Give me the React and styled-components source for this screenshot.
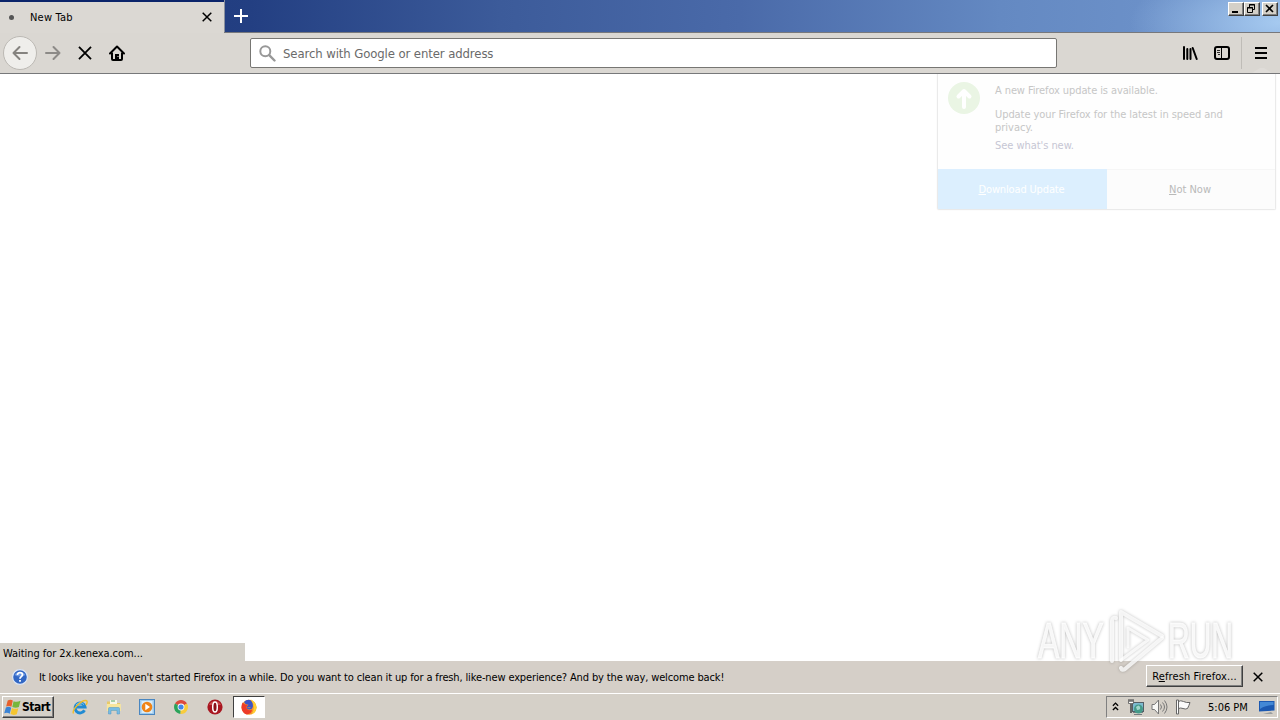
import React from 'react';
import styled, { createGlobalStyle } from 'styled-components';

const GlobalStyle = createGlobalStyle`
  * {
    box-sizing: border-box;
  }

  body {
    margin: 0;
    background: #fff;
    overflow: hidden;
  }
`;

const Desktop = styled.div`
  position: relative;
  display: flex;
  flex-direction: column;
  width: 1280px;
  height: 720px;
  font-family: 'DejaVu Sans Condensed', 'DejaVu Sans', sans-serif;
  font-stretch: condensed;
  font-size: 11px;
  line-height: 13px;
  color: #000;
`;

const Label = styled.span`
  letter-spacing: ${({ $track }) => $track || '0'};
  white-space: nowrap;

  u {
    text-underline-offset: 1px;
    text-decoration-thickness: 1px;
  }
`;

/* ---- browser window ---- */

const TitleBar = styled.header`
  display: flex;
  height: 33px;
  border-bottom: 1px solid #77787c;
  background: radial-gradient(ellipse 150px 60px at 100% 70%, #a6caf0 0%, rgba(166, 202, 240, 0) 100%),
    linear-gradient(to right, #1b3577 0, #233f82 250px, #3c5b9a 500px, #4a6aa9 740px, #6489c2 1000px, #7297ce 1280px);
`;

const Tab = styled.div`
  display: flex;
  align-items: center;
  width: 224px;
  height: 33px;
  padding: 2px 12px 0 9px;
  border-top: 2px solid #0a246a;
  background: #dbd8d3;
`;

const Dot = styled.i`
  width: 5px;
  height: 5px;
  margin: 0 16px 3px 0;
  border-radius: 50%;
  background: #555;
`;

const TabTitle = styled(Label)`
  flex: 1;
  margin-bottom: 3px;
`;

const TabClose = styled.div`
  display: flex;
  margin-bottom: 3px;
`;

const NewTab = styled.div`
  flex: 1;
  padding: 9px 0 0 9px;
  border-left: 1px solid #8b919e;
`;

const WindowControls = styled.div`
  display: flex;
  padding: 2px 2px 0 0;
`;

const ControlButton = styled.div`
  width: 16px;
  height: 14px;
  margin-left: ${({ $gap }) => $gap || 0}px;
  border: 1px solid;
  border-color: #fff #404040 #404040 #fff;
  box-shadow: inset -1px -1px 0 #808080;
  background: #d4d0c8;

  svg {
    display: block;
  }
`;

const Toolbar = styled.nav`
  display: flex;
  align-items: center;
  height: 41px;
  border-bottom: 1px solid #77787a;
  background: #dad7d2;
`;

const ToolButton = styled.div`
  display: flex;
  align-items: center;
  justify-content: center;
  width: 32px;
  height: 32px;
`;

const BackButton = styled(ToolButton)`
  width: 34px;
  height: 34px;
  margin: 0 0 0 3px;
  border: 1px solid #bcb9b4;
  border-radius: 50%;
  background: #efeeeb;
`;

const UrlBar = styled.div`
  display: flex;
  align-items: center;
  width: 807px;
  height: 30px;
  margin: -1px 117px 0 117px;
  padding: 1px 0 0 8px;
  border: 1px solid #777673;
  border-radius: 2px;
  background: #fff;
  color: #6a6a6a;
  font-size: 13px;

  svg {
    margin-right: 7px;
  }
`;

const MenuSlot = styled.div`
  display: flex;
  justify-content: center;
  align-items: center;
  width: 39px;
  height: 32px;
  margin-left: 3px;
  border-left: 1px solid #bfbcb7;
`;

const Page = styled.main`
  display: flex;
  flex: 1;
  align-items: flex-end;
  background: #fff;
`;

const StatusPanel = styled.div`
  width: 245px;
  height: 18px;
  padding: 4px 0 0 3px;
  background: #d4d0c8;
`;

const NotificationBar = styled.div`
  display: flex;
  align-items: center;
  height: 32px;
  padding-left: 12px;
  background: #d5cfc8;
`;

const NotificationText = styled(Label)`
  flex: 1;
  margin-left: 11px;
`;

const RaisedButton = styled.div`
  display: flex;
  align-items: center;
  justify-content: center;
  width: ${({ $width }) => $width}px;
  height: 22px;
  border: 1px solid;
  border-color: #fff #404040 #404040 #fff;
  box-shadow: inset -1px -1px 0 #808080;
  background: #d5d0c8;
`;

const RefreshButton = styled(RaisedButton)`
  margin-bottom: 2px;
`;

const NotificationClose = styled.div`
  display: flex;
  margin: 0 17px 0 10px;
`;

/* ---- update doorhanger, still fading in ---- */

const Doorhanger = styled.aside`
  position: absolute;
  top: 74px;
  left: 937px;
  width: 339px;
  height: 136px;
  border: 1px solid #eaeaea;
  border-top: 0;
  border-radius: 0 0 2px 2px;
  background: #fefefe;
  box-shadow: 0 0 2px rgba(0, 0, 0, 0.06);
  color: #c6c6c6;
`;

const Arrow = styled.i`
  position: absolute;
  top: 68px;
  left: 1252px;
  width: 20px;
  height: 5px;
  background: #dfdcd8;
  clip-path: polygon(0 100%, 40% 0, 60% 0, 100% 100%);
`;

const DoorhangerBody = styled.div`
  display: flex;
  height: 95px;
  padding: 8px 10px 0;

  svg {
    flex: none;
    margin-right: 15px;
  }
`;

const Message = styled.div`
  display: flex;
  flex-direction: column;
  padding-top: 2px;
`;

const Paragraph = styled.div`
  display: flex;
  flex-direction: column;
  margin: 11px 0 5px;
`;

const WhatsNew = styled(Label)`
  color: #c6c6d4;
`;

const DoorhangerButtons = styled.div`
  display: flex;
  height: 40px;
`;

const DoorhangerButton = styled.div`
  display: flex;
  align-items: center;
  justify-content: center;
  width: ${({ $primary }) => ($primary ? 169 : 168)}px;
  padding-right: 2px;
  border-top: 1px solid ${({ $primary }) => ($primary ? '#dcefff' : '#f6f6f6')};
  background: ${({ $primary }) => ($primary ? '#dceffe' : '#fcfcfc')};
  color: ${({ $primary }) => ($primary ? '#fff' : '#b9b9b9')};
`;

/* ---- taskbar ---- */

const Taskbar = styled.footer`
  display: flex;
  align-items: center;
  height: 27px;
  padding: 0 2px 0 2px;
  border-top: 1px solid #fff;
  background: #d5d0c8;
`;

const StartButton = styled(RaisedButton)`
  justify-content: flex-start;
  padding-left: 1px;
  font-weight: bold;
  font-size: 12px;

  svg {
    margin-right: 1px;
  }
`;

const Launchers = styled.div`
  display: flex;
  gap: 17.7px;
  margin-left: 18px;
`;

const ActiveTask = styled.div`
  display: flex;
  align-items: center;
  justify-content: center;
  width: 32px;
  height: 22px;
  margin-left: 10px;
  border: 1px solid;
  border-color: #404040 #fff #fff #404040;
  background: #fff;
`;

const Tray = styled.div`
  display: flex;
  align-items: center;
  width: 172px;
  height: 22px;
  margin-left: auto;
  padding-left: 5px;
  border: 1px solid;
  border-color: #808080 #fff #fff #808080;

  svg {
    flex: none;
  }
`;

const TrayIcons = styled.div`
  display: flex;
  align-items: center;
  gap: 7px;
  margin-left: 9px;
`;

const Clock = styled(Label)`
  margin: 0 11px 0 16px;
`;

const Watermark = styled.svg`
  position: absolute;
  top: 604px;
  left: 1030px;
  filter: drop-shadow(0 0 1.5px rgba(0, 0, 0, 0.3));
`;

const CrossIcon = ({ size, weight = 1.5 }) => (
  <svg width={size} height={size} viewBox="0 0 10 10" stroke="#000" strokeWidth={weight}>
    <path d="M.7.7l8.6 8.6M9.3.7L.7 9.3" />
  </svg>
);

const ArrowIcon = ({ flip, color }) => (
  <svg width="16" height="16" viewBox="0 0 16 16" fill="none" stroke={color} strokeWidth="2" strokeLinecap="round" strokeLinejoin="round" transform={flip ? 'scale(-1 1)' : undefined}>
    <path d="M15 8H1.5M7.5 2l-6 6 6 6" />
  </svg>
);

const HomeIcon = () => (
  <svg width="16" height="16" viewBox="0 0 16 16" fill="none" stroke="#000" strokeLinejoin="round">
    <path d="M1 8.5l7-7 7 7" strokeWidth="2" strokeLinecap="round" />
    <path d="M3 7.5V14q0 1 1 1h8q1 0 1-1V7.5" strokeWidth="2" />
    <path d="M6 15V9h4v6z" fill="#000" stroke="none" />
    <path d="M8.5 11.5h1" stroke="#dad7d2" />
  </svg>
);

const SearchIcon = () => (
  <svg width="17" height="17" viewBox="0 0 17 17" fill="none" stroke="#989898" strokeLinecap="round">
    <circle cx="6.3" cy="6.3" r="5" strokeWidth="2" />
    <path d="M10.2 10.2l5.3 5.3" strokeWidth="2.4" />
  </svg>
);

const LibraryIcon = () => (
  <svg width="16" height="16" viewBox="0 0 16 16" stroke="#000" strokeWidth="2" strokeLinecap="round">
    <path d="M2 2v12M5.3 4v10M8.5 4v10M10.7 3l4 11" />
  </svg>
);

const SidebarIcon = () => (
  <svg width="16" height="16" viewBox="0 0 16 16" fill="none" stroke="#000">
    <rect x="1" y="2" width="14" height="12" rx="2" strokeWidth="2" />
    <path d="M7.5 2v12" />
    <path d="M3 5.5h3M3 7.5h3M4 9.5h2" strokeWidth=".8" />
  </svg>
);

const HelpIcon = () => (
  <svg width="16" height="16" viewBox="0 0 16 16">
    <circle cx="8" cy="8" r="7.4" fill="#3267c4" stroke="#dce6f5" strokeWidth="1.2" />
    <path d="M2.5 6a6 5 0 0 1 11 0Q8 9 2.5 6z" fill="#6e9ae4" />
    <path d="M5.5 6c0-3.4 5-3 5-.2C10.5 7.8 8 7.5 8 9.7M8 11v1.8" fill="none" stroke="#fff" strokeWidth="1.8" />
  </svg>
);

const UpdateIcon = () => (
  <svg width="32" height="32" viewBox="0 0 32 32">
    <circle cx="16" cy="16" r="16" fill="#eaf5e4" />
    <path d="M16 25V10M10.5 14.5L16 9l5.5 5.500" fill="none" stroke="#fff" strokeWidth="4" strokeLinecap="round" strokeLinejoin="round" />
  </svg>
);

const WindowsIcon = () => (
  <svg width="17" height="17" viewBox="0 0 16 16">
    <path d="M3.5 1.500Q6 -.2 8.300 1.500L7 7.300Q4.500 5.800 2 7.100z" fill="#e8602c" />
    <path d="M9 2q3 1.300 6.500-.3L14 7.600Q11 9 7.800 7.500z" fill="#77b63c" />
    <path d="M1.800 8q2.600-1.400 5 .2L5.400 13.800Q3 12.300 .2 13.500z" fill="#3b83d4" />
    <path d="M7.500 8.400q3 1.500 6 .2L12 14.300q-3 1.400-5.900-.1z" fill="#f5c52f" />
  </svg>
);

const ExplorerIcon = () => (
  <svg width="16" height="16" viewBox="0 0 16 16" fill="none">
    <path d="M12.5 11.300A5 5 0 1 1 13 8H4" stroke="#218bd3" strokeWidth="3" />
    <path d="M12 5.600A5 5 0 0 0 4 6" stroke="#74c5ef" />
    <path d="M1.500 14.500C-.5 11 9 1 14 1.500c2 .5 1 3 0 4.500" stroke="#f0bd2b" strokeWidth="1.400" />
  </svg>
);

const FolderIcon = () => (
  <svg width="16" height="16" viewBox="0 0 16 16">
    <path d="M1 2.500h5l1.500 1.500H14v8H1z" fill="#e8ca68" />
    <path d="M4 1h7v4H4z" fill="#f8f8e8" />
    <path d="M5 2h4" stroke="#58a768" />
    <path d="M.8 5h14v7h-14z" fill="#f9e69c" />
    <path d="M2.500 15V9.500q0-1 1-1h9q1 0 1 1V15H11v-3.500H5V15z" fill="#78bce4" stroke="#4b94c4" strokeWidth=".5" />
  </svg>
);

const PlayerIcon = () => (
  <svg width="16" height="16" viewBox="0 0 16 16">
    <rect x=".5" y=".5" width="15" height="15" fill="#9ecbee" stroke="#4a86c0" />
    <rect x="2.500" y="2" width="11" height="12" fill="#d8ecf9" />
    <circle cx="8" cy="8" r="5.300" fill="#ef8417" />
    <path d="M6.300 4.800v6.400L11 8z" fill="#fff" />
  </svg>
);

const ChromeIcon = () => (
  <svg width="16" height="16" viewBox="0 0 16 16">
    <path d="M8 8L2 4.500a7 7 0 0 1 12 0z" fill="#dc4a3d" />
    <path d="M8 8L2 4.500A7 7 0 0 0 7.500 15z" fill="#2ba35a" />
    <path d="M8 8l6-3.500A7 7 0 0 1 7.500 15z" fill="#f8cc3c" />
    <circle cx="8" cy="8" r="3.400" fill="#fff" />
    <circle cx="8" cy="8" r="2.600" fill="#4387e9" />
  </svg>
);

const OperaIcon = () => (
  <svg width="16" height="16" viewBox="0 0 16 16">
    <circle cx="8" cy="8" r="7.600" fill="#a91620" />
    <path d="M2 6a6.500 6 0 0 1 12 0z" fill="#ca4b4c" />
    <ellipse cx="8" cy="8" rx="2.300" ry="5" fill="#8c1018" stroke="#fff" strokeWidth="1.500" />
  </svg>
);

const FirefoxIcon = () => (
  <svg width="16" height="16" viewBox="0 0 16 16">
    <circle cx="8" cy="8.300" r="7.500" fill="#f5952a" />
    <path d="M9.500.3c4 2 6 5 6 8.500a7.500 7 0 0 1-5 6.500q5-7-1-15z" fill="#ffd033" />
    <path d="M1.500 3.500L4 5.500l3 .3-1.500 2C5 10 8 12.500 11 10.500q0 4-5 5C1.500 14.500 0 10 .7 6z" fill="#ed3b28" />
    <path d="M3 3Q6 0 9.500 1.200 12.500 4 11.800 8q-1 3-4 2.500-2.500-.5-2-2.700l1.700-2L4.500 5z" fill="#3a55c8" />
    <path d="M6 8q2 1 4-.3-1.500 2.800-4 .3z" fill="#f5952a" />
  </svg>
);

const NetworkIcon = () => (
  <svg width="16" height="16" viewBox="0 0 16 16" fill="none">
    <rect x="4.500" y="3.500" width="11" height="9" fill="#7dbad0" stroke="#555f66" />
    <path d="M5 13.500h10M6 15.500h8" stroke="#747b7f" />
    <circle cx="10.500" cy="10" r="4.500" fill="#459a89" />
    <path d="M8 8q3-3 4 0t-3 3z" fill="#a1d6cb" />
    <path d="M3 5v9" stroke="#666" strokeWidth="2" />
    <path d="M.5.500h1v2h1v-2h1v2h1v-2h1v4h-5z" fill="#fff" stroke="#555" strokeWidth=".8" />
  </svg>
);

const SpeakerIcon = () => (
  <svg width="17" height="16" viewBox="0 0 17 16" fill="none" stroke="#777">
    <path d="M1 5.500h2.500L7.500 1v14l-4-4.500H1z" fill="#f7f7f5" />
    <path d="M9.500 5.500q2 2.500 0 5M11.500 3.500q4 4.500 0 9M13.500 1.500q5 6.500 0 13" />
  </svg>
);

const FlagIcon = () => (
  <svg width="17" height="16" viewBox="0 0 17 16" stroke="#666">
    <path d="M3.500 2.500q2-1.500 5 0t6.500 1q-1 3-2.500 6-2 1-4.500 0t-4.500 0z" fill="#fafafa" />
    <path d="M1.500 1v14h2V1z" fill="#fff" />
  </svg>
);

const DesktopIcon = () => (
  <svg width="16" height="16" viewBox="0 0 16 16">
    <path d="M0 2h15.500v9.500L0 12.500z" fill="#1c59b1" />
    <path d="M1 3h13.500v3Q7 6 1 10z" fill="#4388d5" />
    <path d="M4 14.500l8-1 2 1z" fill="#5e6a78" />
  </svg>
);

const App = () => {
  return (
    <>
      <GlobalStyle />
      <Desktop>
        <TitleBar>
          <Tab>
            <Dot />
            <TabTitle $track="0.2px">New Tab</TabTitle>
            <TabClose><CrossIcon size={10} /></TabClose>
          </Tab>
          <NewTab>
            <svg width="14" height="14" viewBox="0 0 14 14" stroke="#fff" strokeWidth="2">
              <path d="M7 0v14M0 7h14" />
            </svg>
          </NewTab>
          <WindowControls>
            <ControlButton>
              <svg width="14" height="12" viewBox="0 0 14 12"><path d="M3 8h6v2H3z" /></svg>
            </ControlButton>
            <ControlButton>
              <svg width="14" height="12" viewBox="0 0 14 12" fill="none" stroke="#000">
                <path d="M4.500 4V1.500h5v5H8M4 2h6M2.500 4.500h5v5h-5zM2 5h6" />
              </svg>
            </ControlButton>
            <ControlButton $gap={2}>
              <svg width="14" height="12" viewBox="0 0 14 12" stroke="#000" strokeWidth="1.600">
                <path d="M3 2l7 7M10 2L3 9" />
              </svg>
            </ControlButton>
          </WindowControls>
        </TitleBar>

        <Toolbar>
          <BackButton><ArrowIcon color="#85837f" /></BackButton>
          <ToolButton><ArrowIcon flip color="#8c8a87" /></ToolButton>
          <ToolButton><CrossIcon size={14} weight={1.3} /></ToolButton>
          <ToolButton><HomeIcon /></ToolButton>
          <UrlBar>
            <SearchIcon />
            <Label $track="-0.1px">Search with Google or enter address</Label>
          </UrlBar>
          <ToolButton><LibraryIcon /></ToolButton>
          <ToolButton><SidebarIcon /></ToolButton>
          <MenuSlot>
            <svg width="12" height="12" viewBox="0 0 12 12"><path d="M0 0h12v2H0zM0 5h12v2H0zM0 10h12v2H0z" /></svg>
          </MenuSlot>
        </Toolbar>

        <Page>
          <StatusPanel><Label $track="-0.06px">Waiting for 2x.kenexa.com...</Label></StatusPanel>
        </Page>

        <NotificationBar>
          <HelpIcon />
          <NotificationText $track="-0.137px">
            It looks like you haven't started Firefox in a while. Do you want to clean it up for a fresh, like-new experience? And by the way, welcome back!
          </NotificationText>
          <RefreshButton $width={97}>
            <Label $track="0.12px">R<u>e</u>fresh Firefox...</Label>
          </RefreshButton>
          <NotificationClose><CrossIcon size={10} /></NotificationClose>
        </NotificationBar>

        <Taskbar>
          <StartButton $width={52}>
            <WindowsIcon />
            <Label $track="-0.5px">Start</Label>
          </StartButton>
          <Launchers>
            <ExplorerIcon />
            <FolderIcon />
            <PlayerIcon />
            <ChromeIcon />
            <OperaIcon />
          </Launchers>
          <ActiveTask><FirefoxIcon /></ActiveTask>
          <Tray>
            <svg width="7" height="12" viewBox="0 0 8 12" fill="none" stroke="#000" strokeWidth="1.500">
              <path d="M1 4.500l3-3 3 3M1 9.500l3-3 3 3" />
            </svg>
            <TrayIcons>
              <NetworkIcon />
              <SpeakerIcon />
              <FlagIcon />
            </TrayIcons>
            <Clock>5:06 PM</Clock>
            <DesktopIcon />
          </Tray>
        </Taskbar>

        <Arrow />
        <Doorhanger>
          <DoorhangerBody>
            <UpdateIcon />
            <Message>
              <Label $track="-0.1px">A new Firefox update is available.</Label>
              <Paragraph>
                <Label $track="-0.07px">Update your Firefox for the latest in speed and</Label>
                <Label>privacy.</Label>
              </Paragraph>
              <WhatsNew $track="-0.05px">See what's new.</WhatsNew>
            </Message>
          </DoorhangerBody>
          <DoorhangerButtons>
            <DoorhangerButton $primary><Label $track="-0.15px"><u>D</u>ownload Update</Label></DoorhangerButton>
            <DoorhangerButton><Label><u>N</u>ot Now</Label></DoorhangerButton>
          </DoorhangerButtons>
        </Doorhanger>

        <Watermark width="210" height="72" viewBox="0 0 210 72">
          <g fill="#fff" fillOpacity=".85" stroke="#fff" strokeOpacity=".8" strokeWidth="1" fontFamily="'Liberation Sans', sans-serif" fontSize="50">
            <text transform="translate(8 54) scale(.64 1)">ANY</text>
            <text transform="translate(138 54) scale(.6 1)">RUN</text>
          </g>
          <g fill="none" stroke="#fff" strokeOpacity=".8" strokeWidth="4" strokeLinejoin="round" strokeLinecap="round">
            <path d="M82 57V17q0-4 4-3" />
            <path d="M91 56V8l41 24" />
            <path d="M132 34L95 65q-3 2-4-1" />
            <path d="M91 56l27-20L98 24v19" strokeWidth="3" />
          </g>
        </Watermark>
      </Desktop>
    </>
  );
};

export default App;
